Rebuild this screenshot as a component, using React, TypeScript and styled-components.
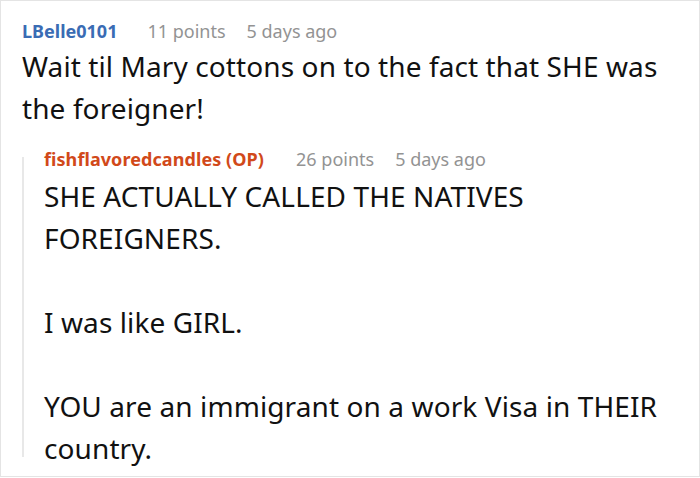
import React from "react";
import styled, { createGlobalStyle } from "styled-components";

const Global = createGlobalStyle`
  html, body { margin: 0; padding: 0; background: #ffffff; }
  body { font-family: "Noto Sans", "Open Sans", sans-serif; }
`;

const Frame = styled.div`
  box-sizing: border-box;
  width: 700px;
  height: 477px;
  border: 1px solid #e4e4e4;
  padding: 18px 30px 0 21px;
  overflow: hidden;
`;

const Header = styled.div`
  display: flex;
  align-items: center;
  gap: 21px;
  height: 24px;
  line-height: 24px;
  font-size: 18px;
`;

const Author = styled.span<{ $op?: boolean }>`
  font-weight: 700;
  color: ${(p) => (p.$op ? "#d1491a" : "#3a6cb4")};
  margin-right: ${(p) => (p.$op ? 11 : 9)}px;
  letter-spacing: ${(p) => (p.$op ? "0.08px" : "0")};
`;

const Meta = styled.span`
  color: #939393;
`;

const Body = styled.div<{ $top: number }>`
  font-size: 28px;
  line-height: 42px;
  letter-spacing: 0.1px;
  color: #111111;
  margin-top: ${(p) => p.$top}px;
`;

const Para = styled.p`
  margin: 0 0 42px 0;
  &:last-child { margin-bottom: 0; }
`;

const Reply = styled.div`
  position: relative;
  margin-top: 18px;
  padding-left: 22px;
  &::before {
    content: "";
    position: absolute;
    left: 0;
    top: 10px;
    bottom: 12px;
    width: 2px;
    background: #e8e8e8;
  }
`;

export default function App() {
  return (
    <>
      <Global />
      <Frame>
        <Header>
          <Author>LBelle0101</Author>
          <Meta>11 points</Meta>
          <Meta>5 days ago</Meta>
        </Header>
        <Body $top={2}>
          <Para>
            Wait til Mary cottons on to the fact that SHE was the foreigner!
          </Para>
        </Body>
        <Reply>
          <Header>
            <Author $op>fishflavoredcandles (OP)</Author>
            <Meta>26 points</Meta>
            <Meta>5 days ago</Meta>
          </Header>
          <Body $top={4}>
            <Para>SHE ACTUALLY CALLED THE NATIVES FOREIGNERS.</Para>
            <Para>I was like GIRL.</Para>
            <Para>YOU are an immigrant on a work Visa in THEIR country.</Para>
          </Body>
        </Reply>
      </Frame>
    </>
  );
}
